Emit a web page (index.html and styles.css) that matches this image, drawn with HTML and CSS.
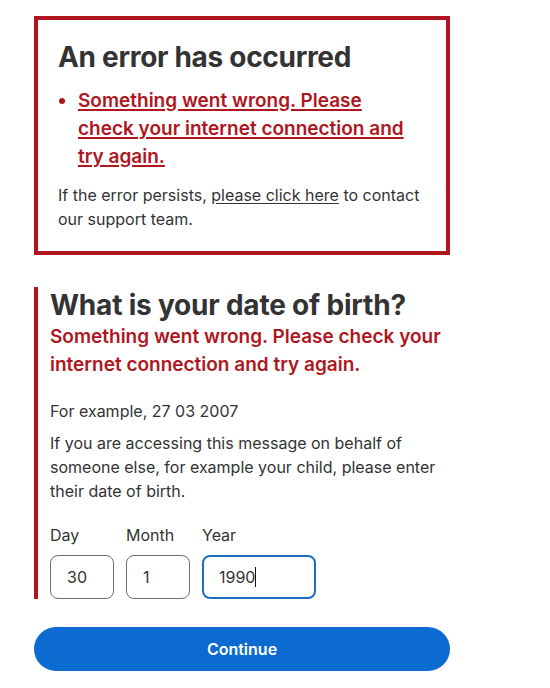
FILE: index.html
```html
<!DOCTYPE html>
<html lang="en">
<head>
<meta charset="utf-8">
<title>Date of birth</title>
<link rel="stylesheet" href="styles.css">
</head>
<body>
<main class="page">
  <div class="error-summary" role="alert">
    <h2 class="error-summary__title">An error has occurred</h2>
    <ul class="error-summary__list">
      <li><a href="#dob">Something went wrong. Please check your internet connection and try again.</a></li>
    </ul>
    <p class="error-summary__body">If the error persists, <a href="#">please click here</a> to contact our support team.</p>
  </div>

  <div class="form-group form-group--error" id="dob">
    <h1 class="question">What is your date of birth?</h1>
    <p class="error-message">Something went wrong. Please check your internet connection and try again.</p>
    <p class="hint hint--first">For example, 27 03 2007</p>
    <p class="hint">If you are accessing this message on behalf of someone else, for example your child, please enter their date of birth.</p>
    <div class="date-input">
      <div class="date-item">
        <span class="date-label">Day</span>
        <div class="field field--short">30</div>
      </div>
      <div class="date-item">
        <span class="date-label">Month</span>
        <div class="field field--short">1</div>
      </div>
      <div class="date-item">
        <span class="date-label">Year</span>
        <div class="field field--long field--focus">1990<span class="caret"></span></div>
      </div>
    </div>
  </div>

  <button class="button" type="button">Continue</button>
</main>
</body>
</html>
```

FILE: styles.css
```css
* { box-sizing: border-box; }

html, body {
  margin: 0;
  padding: 0;
  background: #ffffff;
}

body {
  font-family: Inter, "Liberation Sans", Arial, sans-serif;
  color: #333333;
}

.page {
  width: 416px;
  margin-left: 34px;
  padding-top: 16px;
  display: flex;
  flex-direction: column;
}

.error-summary {
  border: 4px solid #b0161e;
  padding: 20px;
}

.error-summary__title {
  margin: 0;
  font-size: 28px;
  line-height: 34px;
  font-weight: 700;
  letter-spacing: -0.3px;
  color: #333333;
}

.error-summary__list {
  margin: 13px 0 0 0;
  padding: 0 12px 0 20px;
  color: #b0161e;
}

.error-summary__list li {
  font-size: 19px;
  line-height: 28px;
  font-weight: 600;
}

.error-summary__list a {
  color: #b0161e;
  text-decoration: underline;
  text-underline-offset: 2px;
  text-decoration-thickness: 2px;
}

.error-summary__body {
  margin: 12px 0 0 0;
  font-size: 16px;
  line-height: 24px;
  color: #333333;
}

.error-summary__body a {
  color: #333333;
  text-decoration: underline;
  text-underline-offset: 2px;
}

.form-group {
  margin-top: 32px;
  padding-left: 12px;
}

.form-group--error {
  border-left: 4px solid #b0161e;
}

.question {
  margin: 0;
  font-size: 28px;
  line-height: 36px;
  font-weight: 700;
  letter-spacing: -0.2px;
  color: #333333;
}

.error-message {
  margin: 0;
  font-size: 19px;
  line-height: 28px;
  font-weight: 600;
  color: #b0161e;
}

.hint {
  margin: 8px 0 0 0;
  font-size: 16px;
  line-height: 24px;
  color: #333333;
}

.hint--first {
  margin-top: 20px;
}

.date-input {
  display: flex;
  gap: 12px;
  margin-top: 20px;
}

.date-item {
  display: flex;
  flex-direction: column;
  gap: 8px;
}

.date-label {
  font-size: 16px;
  line-height: 24px;
  color: #333333;
}

.field {
  height: 44px;
  border: 1px solid #6f6f6f;
  border-radius: 8px;
  padding: 0 16px;
  font-size: 16px;
  line-height: 42px;
  color: #333333;
  background: #ffffff;
  display: flex;
  align-items: center;
}

.field--short { width: 64px; }

.field--long { width: 114px; }

.field--focus {
  border: 2px solid #1a6fc4;
  padding-left: 15px;
}

.caret {
  display: inline-block;
  width: 1px;
  height: 20px;
  background: #111111;
}

.button {
  margin-top: 28px;
  height: 44px;
  width: 100%;
  border: 0;
  border-radius: 22px;
  background: #0b6bd1;
  color: #ffffff;
  font-family: Inter, "Liberation Sans", Arial, sans-serif;
  font-size: 16px;
  font-weight: 600;
  cursor: pointer;
}
```
